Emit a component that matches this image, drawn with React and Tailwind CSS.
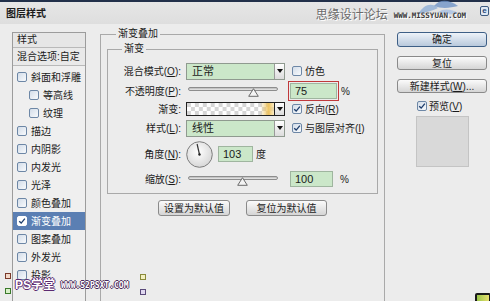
import React from 'react';

const Check = ({ checked, on }) => (
  <span
    className={`flex h-[10px] w-[10px] shrink-0 items-center justify-center rounded-[2px] border ${
      on ? 'border-white bg-white' : 'border-[#6d87a6] bg-gradient-to-br from-[#d3dde9] to-[#f8fafc]'
    }`}
  >
    {checked && (
      <svg viewBox="0 0 10 10" className="h-[8px] w-[8px]">
        <path d="M1.5 5.2 L4 7.6 L8.6 2" stroke="#1f3f6e" strokeWidth="1.7" fill="none" />
      </svg>
    )}
  </span>
);

const Arrow = ({ dark }) => (
  <span
    className={`flex h-full w-[10px] shrink-0 items-center justify-center border-l ${
      dark ? 'border-[#222]' : 'border-[#9a9a9a]'
    } bg-gradient-to-b from-white to-[#dcdcdc]`}
  >
    <svg viewBox="0 0 6 4" className="h-[4px] w-[6px]">
      <path d="M0 0 H6 L3 4 Z" fill="#111" />
    </svg>
  </span>
);

const Select = ({ value }) => (
  <div className="flex h-[17px] w-[99px] items-stretch border border-[#8f9a8f] bg-[#cbe7c9]">
    <span className="flex-1 pl-[5px] text-[11px] leading-[15px]">{value}</span>
    <Arrow />
  </div>
);

const Slider = ({ thumb }) => (
  <div className="relative h-full w-[99px]">
    <div className="absolute left-[2px] top-[6px] h-[4px] w-[90px] rounded-full border border-[#8d8d8d] bg-gradient-to-b from-[#b9b9b9] to-[#ececec]" />
    <svg className="absolute top-[7px]" style={{ left: thumb }} width="11" height="9" viewBox="0 0 11 9">
      <path d="M5.5 0.7 L10.3 8.3 H0.7 Z" fill="#f4f4f4" stroke="#6a6a6a" strokeWidth="1" />
    </svg>
  </div>
);

const Field = ({ value, w }) => (
  <div className={`h-[16px] ${w} border border-[#9fb59f] bg-[#cbe7c9] pl-[4px] text-[11px] leading-[14px]`}>{value}</div>
);

const U = ({ children }) => <span className="underline">{children}</span>;

const Label = ({ children }) => <span className="w-[73px] shrink-0 text-right">{children}</span>;

const Btn = ({ children, main, cls }) => (
  <div
    className={`flex items-center justify-center rounded-[3px] border ${
      main
        ? 'border-[#3e5f86] bg-gradient-to-b from-[#eef3f9] to-[#b9c9dc]'
        : 'border-[#8a8a8a] bg-gradient-to-b from-[#fbfbfb] to-[#d5d5d5]'
    } ${cls}`}
  >
    {children}
  </div>
);

const styles = [
  { name: '斜面和浮雕' },
  { name: '等高线', sub: true },
  { name: '纹理', sub: true },
  { name: '描边' },
  { name: '内阴影' },
  { name: '内发光' },
  { name: '光泽' },
  { name: '颜色叠加' },
  { name: '渐变叠加', on: true },
  { name: '图案叠加' },
  { name: '外发光' },
  { name: '投影' },
];

export default function App() {
  return (
    <div className="relative h-[301px] w-[490px] overflow-hidden bg-[#ececec] font-['Liberation_Sans','Noto_Sans_CJK_SC',sans-serif] text-[10px] text-[#1b1b1b]">
      {/* title bar */}
      <div className="flex h-[24px] items-center border-t-2 border-[#22304a] bg-gradient-to-b from-[#e6e6e6] to-[#dedede] pl-[6px]">
        <span className="font-bold">图层样式</span>
        <div className="relative ml-auto flex h-full items-center pr-[24px]">
          <svg className="absolute right-[30px] top-[-2px]" width="44" height="18" viewBox="0 0 44 18">
            <path d="M2 14 C8 4 16 2 22 8 C18 10 12 12 2 14 Z" fill="#8eaed6" opacity="0.8" />
            <path d="M18 6 C24 -2 34 0 42 6 C34 8 26 9 18 6 Z" fill="#6f94c7" opacity="0.8" />
            <path d="M22 12 C28 8 36 9 42 13 C34 15 28 15 22 12 Z" fill="#a9c1e2" opacity="0.8" />
          </svg>
          <span className="relative mt-[4px] text-[12px] leading-none text-[#6a6a6a] [text-shadow:1px_1px_0_#fff]">思缘设计论坛</span>
          <span className="relative ml-[6px] mt-[5px] font-['DejaVu_Sans_Mono',monospace] text-[7.5px] font-bold leading-none text-[#3a3a3a] [text-shadow:1px_1px_0_#fff]">
            WWW.MISSYUAN.COM
          </span>
          <span className="absolute right-[1px] top-[4px] flex h-[10px] w-[9px] items-center justify-center rounded-[2px] border border-[#3d5a80] bg-[#dfe8f3] text-[8px] font-bold leading-none text-[#2a4a78]">
            e
          </span>
        </div>
      </div>

      {/* body */}
      <div className="flex items-start pl-[12px]">
        {/* left list */}
        <div className="mt-[8px] h-[290px] w-[74px] shrink-0 border border-[#9c9c9c] bg-[#efefef]">
          <div className="h-[15px] border-b border-[#b9b9b9] bg-[#e6e6e6] pl-[4px] leading-[14px]">样式</div>
          <div className="h-[18px] border-b border-[#b9b9b9] bg-[#e9e9e9] pl-[4px] leading-[17px] whitespace-nowrap">
            混合选项:自定
          </div>
          <div className="pt-[2px]">
            {styles.map((s) => (
              <div
                key={s.name}
                className={`flex h-[18px] items-center gap-[4px] whitespace-nowrap ${s.sub ? 'pl-[16px]' : 'pl-[4px]'} ${
                  s.on ? 'bg-[#5b7fb3] text-white' : ''
                }`}
              >
                <Check checked={s.on} on={s.on} />
                <span>{s.name}</span>
              </div>
            ))}
          </div>
        </div>

        {/* main group */}
        <fieldset className="ml-[14px] mt-[3px] h-[290px] w-[285px] shrink-0 border border-[#a9a9a9] px-[6px]">
          <legend className="ml-[9px] px-[2px] leading-[14px]">渐变叠加</legend>
          <fieldset className="mt-[1px] border border-[#a9a9a9] pb-[5px] pt-[6px]">
            <legend className="ml-[14px] px-[2px] leading-[14px]">渐变</legend>

            <div className="flex h-[18px] items-center">
              <Label>
                混合模式(<U>O</U>):
              </Label>
              <div className="ml-[5px]">
                <Select value="正常" />
              </div>
              <div className="ml-[7px] flex items-center gap-[3px]">
                <Check />
                <span>仿色</span>
              </div>
            </div>

            <div className="mt-[1px] flex h-[20px] items-center">
              <Label>
                不透明度(<U>P</U>):
              </Label>
              <div className="ml-[5px] h-full">
                <Slider thumb={62} />
              </div>
              <div className="ml-[3px] border border-[#c0393b] p-[1px]">
                <Field value="75" w="w-[47px]" />
              </div>
              <span className="ml-[2px]">%</span>
            </div>

            <div className="mt-[1px] flex h-[14px] items-center">
              <Label>渐变:</Label>
              <div className="ml-[5px] flex h-[14px] w-[99px] border border-[#222]">
                <svg className="flex-1" height="12" viewBox="0 0 88 12" preserveAspectRatio="none">
                  <defs>
                    <pattern id="chk" width="8" height="8" patternUnits="userSpaceOnUse">
                      <rect width="8" height="8" fill="#fff" />
                      <rect width="4" height="4" fill="#d6d6d6" />
                      <rect x="4" y="4" width="4" height="4" fill="#d6d6d6" />
                    </pattern>
                    <linearGradient id="gr" x1="0" x2="1" y1="0" y2="0">
                      <stop offset="0" stopColor="#f2c860" stopOpacity="0" />
                      <stop offset="0.84" stopColor="#f2c860" stopOpacity="0" />
                      <stop offset="0.94" stopColor="#efc25a" stopOpacity="0.95" />
                      <stop offset="1" stopColor="#f6dc9a" stopOpacity="0.6" />
                    </linearGradient>
                  </defs>
                  <rect width="88" height="12" fill="url(#chk)" />
                  <rect width="88" height="12" fill="url(#gr)" />
                </svg>
                <Arrow dark />
              </div>
              <div className="ml-[7px] flex items-center gap-[3px]">
                <Check checked />
                <span>
                  反向(<U>R</U>)
                </span>
              </div>
            </div>

            <div className="mt-[3px] flex h-[18px] items-center">
              <Label>
                样式(<U>L</U>):
              </Label>
              <div className="ml-[5px]">
                <Select value="线性" />
              </div>
              <div className="ml-[7px] flex items-center gap-[3px]">
                <Check checked />
                <span>
                  与图层对齐(<U>I</U>)
                </span>
              </div>
            </div>

            <div className="mt-[3px] flex h-[28px] items-center">
              <Label>
                角度(<U>N</U>):
              </Label>
              <svg className="ml-[5px]" width="27" height="27" viewBox="0 0 27 27">
                <defs>
                  <radialGradient id="dial" cx="0.45" cy="0.4" r="0.65">
                    <stop offset="0" stopColor="#ffffff" />
                    <stop offset="1" stopColor="#d4d4d4" />
                  </radialGradient>
                </defs>
                <circle cx="13.5" cy="13.5" r="12.8" fill="url(#dial)" stroke="#7d7d7d" strokeWidth="1" />
                <line x1="13.5" y1="13.5" x2="11.1" y2="3" stroke="#333" strokeWidth="1.2" />
                <circle cx="13.5" cy="13.5" r="1.2" fill="#222" />
              </svg>
              <div className="ml-[5px]">
                <Field value="103" w="w-[35px]" />
              </div>
              <span className="ml-[3px]">度</span>
            </div>

            <div className="mt-[2px] flex h-[18px] items-center">
              <Label>
                缩放(<U>S</U>):
              </Label>
              <div className="ml-[5px] h-full">
                <Slider thumb={51} />
              </div>
              <div className="ml-[5px]">
                <Field value="100" w="w-[43px]" />
              </div>
              <span className="ml-[7px]">%</span>
            </div>
          </fieldset>

          <div className="mt-[6px] flex justify-center gap-[16px]">
            <Btn cls="h-[16px] w-[72px]">设置为默认值</Btn>
            <Btn cls="h-[16px] w-[81px]">复位为默认值</Btn>
          </div>
        </fieldset>

        {/* right column */}
        <div className="ml-[12px] mt-[8px] flex w-[90px] shrink-0 flex-col">
          <Btn main cls="h-[15px]">确定</Btn>
          <Btn cls="mt-[9px] h-[14px]">复位</Btn>
          <Btn cls="mt-[9px] h-[14px]">
            新建样式(<U>W</U>)...
          </Btn>
          <div className="mt-[6px] flex h-[14px] items-center gap-[2px] pl-[20px]">
            <Check checked />
            <span>
              预览(<U>V</U>)
            </span>
          </div>
          <div className="ml-[19px] mt-[3px] h-[51px] w-[53px] border border-[#c4c4c4] bg-[#d9d9d9]" />
        </div>
      </div>

      {/* bottom watermark */}
      <div className="absolute left-[5px] top-[273px] h-[6px] w-[6px] border border-[#7a3a2a] bg-[#f3d8c8]" />
      <div className="absolute left-[5px] top-[288px] h-[6px] w-[6px] border border-[#3a7a2a] bg-[#d8f0c8]" />
      <div className="absolute left-[140px] top-[274px] h-[6px] w-[6px] border border-[#8a8a3a] bg-[#f3f0c0]" />
      <div className="absolute left-[140px] top-[289px] h-[6px] w-[6px] border border-[#5a4a7a] bg-[#e0d8f0]" />
      <div className="absolute left-[15px] top-[279px] flex items-end whitespace-nowrap">
        <span className="text-[12px] font-bold leading-none text-white [text-shadow:1px_0_0_#5b2a70,-1px_0_0_#5b2a70,0_1px_0_#5b2a70,0_-1px_0_#5b2a70]">
          PS学堂
        </span>
        <span className="mb-[1px] ml-[6px] font-['DejaVu_Sans_Mono',monospace] text-[8px] font-bold leading-none text-white [text-shadow:1px_0_0_#4a2a5a,-1px_0_0_#4a2a5a,0_1px_0_#4a2a5a,0_-1px_0_#4a2a5a]">
          WWW.52PSXT.COM
        </span>
      </div>
      <div className="absolute left-[475px] top-[293px] h-[10px] w-[16px] rounded-[2px] bg-[#1a1a1a] p-[2px]">
        <div className="h-full w-full bg-gradient-to-r from-[#9ac64a] to-[#e8e070]" />
      </div>
    </div>
  );
}
